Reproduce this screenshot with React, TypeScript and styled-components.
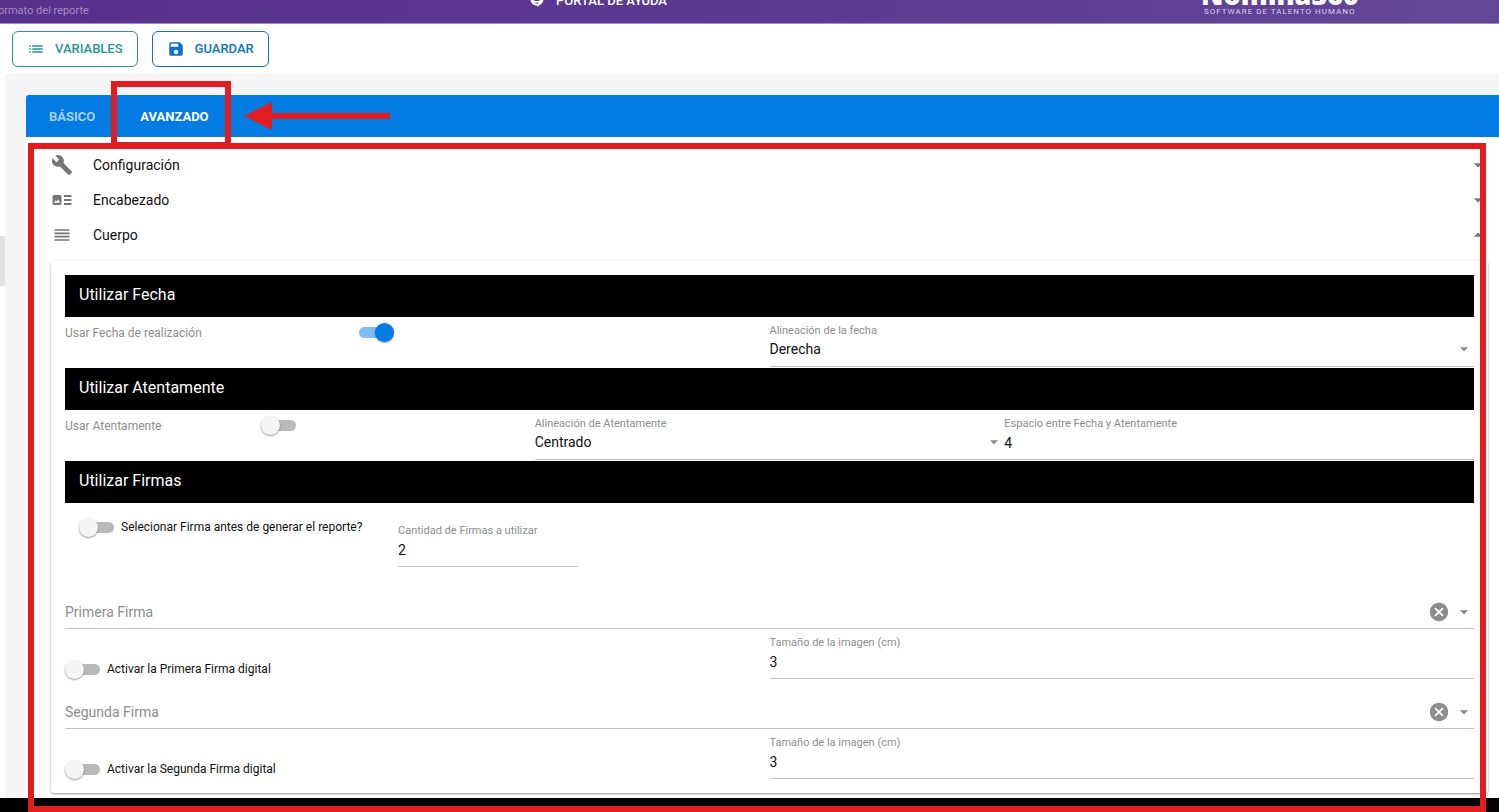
import React, { useState } from "react";
import styled, { createGlobalStyle, css } from "styled-components";
import { MdList, MdSave, MdBuild, MdArrowDropDown, MdArrowDropUp, MdCancel, MdReorder } from "react-icons/md";

const RED = "#e31c20";

const GlobalStyle = createGlobalStyle`
  *, *::before, *::after { box-sizing: border-box; }
  body {
    margin: 0;
    background: #fff;
    color: #111;
    font-family: Roboto, "Liberation Sans", sans-serif;
    font-size: 14px;
    overflow-x: hidden;
  }
  button, input, select { font: inherit; color: inherit; }
`;

const Header = styled.header`
  display: grid;
  grid-template-columns: 529px 1fr 298px;
  grid-template-rows: 100%;
  align-items: end;
  height: 24px;
  overflow: hidden;
  background: linear-gradient(90deg, #57308c, #5c3a92 50%, #644697);
  border-bottom: 1px solid #a48cc4;
  color: #fff;
`;

const Crumb = styled.span`
  height: 20px;
  line-height: 16px;
  margin-left: -8px;
  font-size: 11px;
  color: #a58bc6;
`;

const Portal = styled.a`
  display: flex;
  align-items: center;
  gap: 11px;
  height: 44px;
  color: #fff;
  font-size: 13px;
  font-weight: 500;
  line-height: 16px;
  text-decoration: none;
`;

const Brand = styled.div`
  display: flex;
  flex-direction: column;
  justify-content: flex-end;
  height: 46px;
  padding-bottom: 6px;
`;

const BrandName = styled.strong`
  font-family: "Open Sans", sans-serif;
  font-size: 27px;
  font-weight: 800;
  line-height: 24px;
`;

const BrandLine = styled.span`
  padding-left: 3px;
  font-family: Roboto, sans-serif;
  font-size: 8px;
  line-height: 10px;
  letter-spacing: 1px;
  color: #d9cdea;
`;

const Toolbar = styled.div`
  display: flex;
  gap: 14px;
  padding: 7px 12px;
  height: 50px;
`;

const ToolButton = styled.button<{ $color: string }>`
  display: flex;
  align-items: center;
  gap: 10px;
  height: 36px;
  padding: 0 14px;
  border: 1px solid ${(p) => p.$color};
  border-radius: 6px;
  background: #fff;
  color: ${(p) => p.$color};
  font-size: 13px;
  font-weight: 500;
  line-height: 20px;
  cursor: pointer;
`;

const Body = styled.div`
  display: flex;
`;

const Drawer = styled.aside`
  flex: none;
  width: 5px;
  padding-top: 162px;
`;

const DrawerHandle = styled.div`
  height: 50px;
  background: #e2e2e2;
`;

const Main = styled.main`
  flex: 1;
  min-width: 0;
  padding: 21px 0 0 21px;
  background: #f5f5f5;
`;

const Tabs = styled.nav`
  display: flex;
  height: 42px;
  background: #027be3;
  border-top-left-radius: 3px;
`;

const Tab = styled.button<{ $active?: boolean }>`
  position: relative;
  padding: 0 22px 0 23px;
  border: 0;
  background: none;
  font-size: 13px;
  font-weight: 700;
  color: ${(p) => (p.$active ? "#fff" : "#a6d0f5")};
  cursor: pointer;
`;

const TabMark = styled.span`
  position: absolute;
  inset: -14px 0 -11px -6px;
  z-index: 2;
  border: 6px solid ${RED};
  pointer-events: none;
`;

const Pointer = styled.svg`
  align-self: center;
  margin-left: 13px;
`;

const Panel = styled.section`
  position: relative;
  padding: 10px 11px 5px 25px;
  background: #fff;
`;

const PanelMark = styled.div`
  position: absolute;
  inset: 6px 13px -14px 2px;
  z-index: 1;
  border: 6px solid ${RED};
  pointer-events: none;
`;

const Item = styled.button`
  display: flex;
  align-items: center;
  width: 100%;
  height: 35px;
  padding: 0;
  border: 0;
  background: none;
  text-align: left;
  color: #111;
  cursor: pointer;
  & > svg { color: #757575; }
`;

const ItemIcon = styled.span`
  display: flex;
  justify-content: center;
  width: 22px;
  margin-right: 20px;
  color: #757575;
`;

const ItemLabel = styled.span`
  flex: 1;
`;

const Card = styled.div`
  margin-top: 9px;
  padding: 14px;
  border-radius: 3px;
  background: #fff;
  box-shadow: 0 1px 3px rgba(0, 0, 0, 0.3), 0 1px 1px rgba(0, 0, 0, 0.15);
`;

const Heading = styled.h2`
  margin: 0;
  padding: 0 14px;
  background: #000;
  color: #fff;
  font-size: 16px;
  font-weight: 400;
  line-height: 40px;
  height: 42px;
`;

const Columns = styled.div<{ $count: number }>`
  display: grid;
  grid-template-columns: repeat(${(p) => p.$count}, minmax(0, 1fr));
`;

const OptionColumns = styled(Columns)`
  min-height: 51px;
`;

const OptionRow = styled.label`
  display: grid;
  grid-template-columns: 5fr 7fr;
  align-items: center;
  height: 31px;
  font-size: 12px;
  color: #8d8d8d;
`;

const SwitchLabel = styled.label<{ $bottom?: boolean }>`
  display: flex;
  align-items: center;
  gap: 7px;
  height: 20px;
  font-size: 12px;
  color: #111;
  ${(p) => p.$bottom && css`align-self: end;`}
`;

const SwitchInput = styled.input`
  appearance: none;
  display: flex;
  align-items: center;
  flex: none;
  width: 35px;
  height: 20px;
  margin: 0;
  cursor: pointer;
  &::before {
    content: "";
    flex: none;
    width: 35px;
    height: 11px;
    border-radius: 6px;
    background: #b9b9b9;
  }
  &::after {
    content: "";
    flex: none;
    width: 19px;
    height: 19px;
    margin-left: -35px;
    border-radius: 50%;
    background: #f5f5f5;
    box-shadow: 0 1px 2px rgba(0, 0, 0, 0.4);
  }
  &:checked::before { background: #80bdf1; }
  &:checked::after { margin-left: -19px; background: #027be3; }
`;

const FieldBox = styled.label<{ $narrow?: boolean }>`
  display: flex;
  flex-direction: column;
  width: ${(p) => (p.$narrow ? "180px" : "100%")};
  height: 50px;
  padding-top: 7px;
  border-bottom: 1px solid #c2c2c2;
`;

const Caption = styled.span`
  font-size: 11px;
  line-height: 14px;
  color: #8d8d8d;
`;

const ControlLine = styled.span<{ $text?: boolean }>`
  display: flex;
  align-items: center;
  height: ${(p) => (p.$text ? "24px" : "22px")};
  color: #8d8d8d;
`;

const controlStyle = css`
  flex: 1;
  min-width: 0;
  height: 22px;
  margin: 0;
  padding: 0;
  border: 0;
  outline: 0;
  background: none;
  color: #111;
  font-size: 14px;
`;

const TextInput = styled.input`${controlStyle}`;
const Select = styled.select`
  ${controlStyle}
  appearance: none;
`;

const SignatureBox = styled.div`
  display: flex;
  align-items: center;
  height: 50px;
  padding-top: 16px;
  border-bottom: 1px solid #c2c2c2;
  color: #8d8d8d;
`;

const SignatureSelect = styled(Select)`
  color: #8d8d8d;
`;

const ClearButton = styled.button`
  display: flex;
  margin-right: 4px;
  padding: 0;
  border: 0;
  background: none;
  color: #8d8d8d;
  cursor: pointer;
`;

const SignatureSetup = styled.div`
  display: grid;
  grid-template-columns: 291px 180px;
  column-gap: 28px;
  align-items: start;
  height: 76px;
  padding: 14px;
`;

const Footer = styled.footer`
  height: 14px;
  background: #000;
`;

function Switch({ initial = false }: { initial?: boolean }) {
  const [on, setOn] = useState(initial);
  return <SwitchInput type="checkbox" role="switch" checked={on} onChange={() => setOn(!on)} />;
}

function TextField({ label, value, narrow }: { label: string; value: string; narrow?: boolean }) {
  return (
    <FieldBox $narrow={narrow}>
      <Caption>{label}</Caption>
      <ControlLine $text>
        <TextInput defaultValue={value} />
      </ControlLine>
    </FieldBox>
  );
}

function SelectField({ label, value }: { label: string; value: string }) {
  return (
    <FieldBox>
      <Caption>{label}</Caption>
      <ControlLine>
        <Select defaultValue={value}>
          <option>Izquierda</option>
          <option>Centrado</option>
          <option>Derecha</option>
        </Select>
        <MdArrowDropDown size={20} />
      </ControlLine>
    </FieldBox>
  );
}

function Signature({ name }: { name: string }) {
  return (
    <>
      <SignatureBox>
        <SignatureSelect aria-label={name}>
          <option>{name}</option>
        </SignatureSelect>
        <ClearButton type="button" aria-label={`Quitar ${name}`}>
          <MdCancel size={22} />
        </ClearButton>
        <MdArrowDropDown size={20} />
      </SignatureBox>
      <Columns $count={2}>
        <SwitchLabel $bottom>
          <Switch />
          Activar la {name} digital
        </SwitchLabel>
        <TextField label="Tamaño de la imagen (cm)" value="3" />
      </Columns>
    </>
  );
}

function SupportIcon() {
  return (
    <svg width="16" height="14" viewBox="0 0 16 14" aria-hidden="true">
      <path d="M8 -2a6.500 6.500 0 0 1 6.500 7c0 3-2 5.500-4.500 6.500L8.500 13v-1.500C4 11.500 1.500 9 1.500 5A6.500 6.500 0 0 1 8 -2z" fill="#fff" />
      <path d="M5.500 6.500h5M6.500 9h3" stroke="#5c3a92" strokeWidth="1" />
    </svg>
  );
}

function HeaderBlockIcon() {
  return (
    <svg width="20" height="20" viewBox="0 0 20 20" aria-hidden="true">
      <path fill="currentColor" fillRule="evenodd" d="M2 5h6a1.500 1.500 0 0 1 1.500 1.500v7A1.500 1.500 0 0 1 8 15H2A1.500 1.500 0 0 1 .5 13.500v-7A1.500 1.500 0 0 1 2 5zM2 12.800h6.200L6.200 9.500l-1.600 2-1-1.200z" />
      <path stroke="currentColor" strokeWidth="1.800" d="M12 6h7.500M12 10h7.500M12 14h7.500" />
    </svg>
  );
}

export default function App() {
  return (
    <>
      <GlobalStyle />
      <Header>
        <Crumb>Formato del reporte</Crumb>
        <Portal href="#ayuda">
          <SupportIcon />
          PORTAL DE AYUDA
        </Portal>
        <Brand>
          <BrandName>Nomina360</BrandName>
          <BrandLine>SOFTWARE DE TALENTO HUMANO</BrandLine>
        </Brand>
      </Header>
      <Toolbar>
        <ToolButton type="button" $color="#26978a">
          <MdList size={18} />
          VARIABLES
        </ToolButton>
        <ToolButton type="button" $color="#0b72cc">
          <MdSave size={18} />
          GUARDAR
        </ToolButton>
      </Toolbar>
      <Body>
        <Drawer>
          <DrawerHandle />
        </Drawer>
        <Main>
          <Tabs>
            <Tab type="button">BÁSICO</Tab>
            <Tab type="button" $active>
              AVANZADO
              <TabMark />
            </Tab>
            <Pointer width="147" height="30" viewBox="0 0 147 30" aria-hidden="true">
              <path d="M0 15 28 1v11h118v6H28v11z" fill={RED} />
            </Pointer>
          </Tabs>
          <Panel>
            <Item type="button">
              <ItemIcon><MdBuild size={22} /></ItemIcon>
              <ItemLabel>Configuración</ItemLabel>
              <MdArrowDropDown size={20} />
            </Item>
            <Item type="button">
              <ItemIcon><HeaderBlockIcon /></ItemIcon>
              <ItemLabel>Encabezado</ItemLabel>
              <MdArrowDropDown size={20} />
            </Item>
            <Item type="button" aria-expanded="true">
              <ItemIcon><MdReorder size={20} /></ItemIcon>
              <ItemLabel>Cuerpo</ItemLabel>
              <MdArrowDropUp size={20} />
            </Item>
            <Card>
              <Heading>Utilizar Fecha</Heading>
              <OptionColumns $count={2}>
                <OptionRow>
                  Usar Fecha de realización
                  <Switch initial />
                </OptionRow>
                <SelectField label="Alineación de la fecha" value="Derecha" />
              </OptionColumns>
              <Heading>Utilizar Atentamente</Heading>
              <OptionColumns $count={3}>
                <OptionRow>
                  Usar Atentamente
                  <Switch />
                </OptionRow>
                <SelectField label="Alineación de Atentamente" value="Centrado" />
                <TextField label="Espacio entre Fecha y Atentamente" value="4" />
              </OptionColumns>
              <Heading>Utilizar Firmas</Heading>
              <SignatureSetup>
                <SwitchLabel>
                  <Switch />
                  Selecionar Firma antes de generar el reporte?
                </SwitchLabel>
                <TextField label="Cantidad de Firmas a utilizar" value="2" narrow />
              </SignatureSetup>
              <Signature name="Primera Firma" />
              <Signature name="Segunda Firma" />
            </Card>
            <PanelMark />
          </Panel>
        </Main>
      </Body>
      <Footer />
    </>
  );
}
